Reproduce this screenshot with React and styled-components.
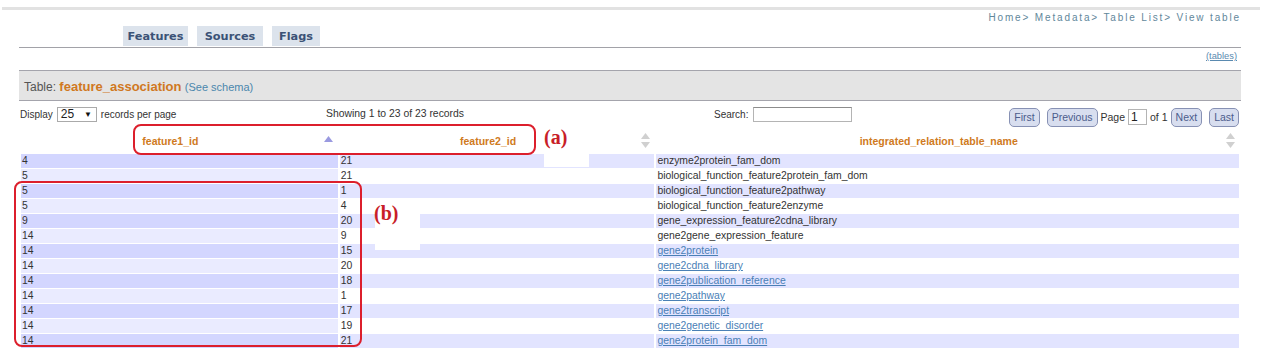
import React from 'react';
import styled, {createGlobalStyle} from 'styled-components';

//rows shown on the first page
const rows = [
    {a: 4, b: 21, name: 'enzyme2protein_fam_dom'},
    {a: 5, b: 21, name: 'biological_function_feature2protein_fam_dom'},
    {a: 5, b: 1, name: 'biological_function_feature2pathway'},
    {a: 5, b: 4, name: 'biological_function_feature2enzyme'},
    {a: 9, b: 20, name: 'gene_expression_feature2cdna_library'},
    {a: 14, b: 9, name: 'gene2gene_expression_feature'},
    {a: 14, b: 15, name: 'gene2protein', link: true},
    {a: 14, b: 20, name: 'gene2cdna_library', link: true},
    {a: 14, b: 18, name: 'gene2publication_reference', link: true},
    {a: 14, b: 1, name: 'gene2pathway', link: true},
    {a: 14, b: 17, name: 'gene2transcript', link: true},
    {a: 14, b: 19, name: 'gene2genetic_disorder', link: true},
    {a: 14, b: 21, name: 'gene2protein_fam_dom', link: true},
];

const SortAsc = () => (
    <svg width="9" height="6" viewBox="0 0 9 6">
        <path d="M4.5 0 L9 6 L0 6 Z" fill="#9a9ae0"/>
    </svg>
);

const SortBoth = () => (
    <svg width="9" height="16" viewBox="0 0 9 16">
        <path d="M4.5 0 L9 6 L0 6 Z" fill="#d0d0d0"/>
        <path d="M0 9 L9 9 L4.5 15 Z" fill="#d0d0d0"/>
    </svg>
);

const App = () => {
    return (
        <Page>
            <GlobalStyle/>
            <TopRule/>
            <Content>
                <Breadcrumb>Home&gt; Metadata&gt; Table List&gt; View table</Breadcrumb>
                <TabBar>
                    <Tab $w={65}>Features</Tab>
                    <Tab $w={66}>Sources</Tab>
                    <Tab $w={48}>Flags</Tab>
                </TabBar>
                <TablesLink>(tables)</TablesLink>
                <TitleBar>
                    Table: <strong>feature_association</strong> <small>(See schema)</small>
                </TitleBar>
                <Controls>
                    <Length>
                        Display
                        <FakeSelect>25<span>&#9660;</span></FakeSelect>
                        records per page
                    </Length>
                    <Info>Showing 1 to 23 of 23 records</Info>
                    <Search>Search: <SearchBox/></Search>
                    <Paging>
                        <PageButton>First</PageButton>
                        <PageButton $gap>Previous</PageButton>
                        <span>Page</span>
                        <PageBox>1</PageBox>
                        <span>of 1</span>
                        <PageButton>Next</PageButton>
                        <PageButton $gap>Last</PageButton>
                    </Paging>
                </Controls>
                <DataTable>
                    <colgroup>
                        <col style={{width: 317}}/>
                        <col style={{width: 315}}/>
                        <col style={{width: 583}}/>
                    </colgroup>
                    <thead>
                    <tr>
                        <Th>feature1_id<Icon><SortAsc/></Icon></Th>
                        <Th>feature2_id<Icon $both><SortBoth/></Icon></Th>
                        <Th>integrated_relation_table_name<Icon $both><SortBoth/></Icon></Th>
                    </tr>
                    </thead>
                    <tbody>
                    {rows.map((row, index) => {
                        const odd = index % 2 === 0;
                        return <tr key={index}>
                            <Td $odd={odd} $sorted>{row.a}</Td>
                            <Td $odd={odd}>{row.b}</Td>
                            <Td $odd={odd}>{row.link ? <a>{row.name}</a> : row.name}</Td>
                        </tr>
                    })}
                    </tbody>
                </DataTable>
            </Content>

            {/* annotations drawn over the screenshot */}
            <Patch style={{left: 544, top: 153, width: 45, height: 14}}/>
            <Patch style={{left: 375, top: 200, width: 45, height: 50}}/>
            <Marker style={{left: 133, top: 124, width: 403, height: 31}}/>
            <Marker style={{left: 14, top: 181, width: 348, height: 166}}/>
            <Label style={{left: 544, top: 126}}>(a)</Label>
            <Label style={{left: 374, top: 202}}>(b)</Label>
        </Page>
    );
};

const GlobalStyle = createGlobalStyle`
    body {
        margin: 0;
        background: #fff;
        font-family: "Liberation Sans", Arial, sans-serif;
    }
`;

const Page = styled.div`
    position: relative;
    width: 1279px;
    height: 351px;
    overflow: hidden;
    color: #333;
`;

const TopRule = styled.div`
    margin: 7px 19px 0 2px;
    border-top: 3px solid #e2e2e2;
`;

const Content = styled.div`
    margin-left: 19px;
    width: 1222px;
`;

const Breadcrumb = styled.div`
    margin-top: 2px;
    height: 12px;
    line-height: 12px;
    text-align: right;
    font-size: 10px;
    letter-spacing: 1.85px;
    color: #62879b;
`;

const TabBar = styled.div`
    display: flex;
    align-items: flex-end;
    gap: 9px;
    margin-top: 2px;
    height: 21px;
    padding-left: 104px;
    border-bottom: 1px solid #a2a2a8;
`;

const Tab = styled.div`
    width: ${p => p.$w}px;
    height: 20px;
    margin-bottom: 1px;
    background: #dce3ec;
    color: #3b5276;
    font-family: "DejaVu Sans", Verdana, sans-serif;
    font-weight: bold;
    font-size: 11.3px;
    line-height: 22px;
    text-align: center;
`;

const TablesLink = styled.div`
    height: 14px;
    line-height: 14px;
    margin-top: 1px;
    padding-right: 4px;
    text-align: right;
    font-size: 9.3px;
    color: #5a8ab0;
    text-decoration: underline;
`;

const TitleBar = styled.div`
    margin-top: 7px;
    height: 29px;
    line-height: 31px;
    padding-left: 5px;
    background: #e4e4e4;
    border-top: 1px solid #a4a4ac;
    border-bottom: 1px solid #a4a4ac;
    font-size: 12px;
    color: #555;

    strong {
        font-size: 13px;
        color: #d0781f;
    }

    small {
        font-size: 11px;
        color: #4b87ad;
    }
`;

const Controls = styled.div`
    display: flex;
    align-items: center;
    height: 26px;
    font-size: 10px;
    color: #333;
`;

const Length = styled.div`
    display: flex;
    align-items: center;
    gap: 4px;
    width: 306px;
    padding-left: 1px;
`;

const FakeSelect = styled.div`
    display: flex;
    justify-content: space-between;
    align-items: center;
    width: 40px;
    height: 15px;
    padding: 0 4px 0 3px;
    box-sizing: border-box;
    border: 1px solid #aaa;
    font-size: 12px;
    color: #222;

    span {
        font-size: 8px;
        color: #111;
    }
`;

const Info = styled.div`
    width: 388px;
    margin-top: -2px;
    font-size: 10.4px;
`;

const Search = styled.div`
    display: flex;
    align-items: center;
    gap: 5px;
    margin-top: 1px;
`;

const SearchBox = styled.div`
    width: 97px;
    height: 13px;
    border: 1px solid #b4b4b4;
    border-top-color: #8c8c8c;
`;

const Paging = styled.div`
    display: flex;
    align-items: center;
    gap: 3px;
    margin-left: auto;
    margin-right: 2px;
    margin-top: 6px;
    font-size: 10.5px;
    color: #333;
`;

const PageButton = styled.div`
    height: 17px;
    line-height: 17px;
    padding: 0 4px;
    margin-left: ${p => p.$gap ? 4 : 0}px;
    border: 1px solid #8791b4;
    border-radius: 5px;
    background: #d8deef;
    color: #4c5c8c;
    font-size: 10.5px;
`;

const PageBox = styled.div`
    width: 15px;
    height: 14px;
    line-height: 14px;
    padding-left: 2px;
    border: 1px solid #b4b4b4;
    font-size: 12px;
    color: #222;
`;

const DataTable = styled.table`
    border-collapse: separate;
    border-spacing: 2px 1px;
    table-layout: fixed;
    font-size: 10.4px;
`;

const Th = styled.th`
    position: relative;
    height: 25px;
    padding: 1px 18px 0 0;
    box-sizing: border-box;
    text-align: center;
    font-size: 10.5px;
    font-weight: bold;
    color: #cf7a21;
`;

const Icon = styled.span`
    position: absolute;
    right: ${p => p.$both ? 4 : 5}px;
    top: ${p => p.$both ? 5 : 8}px;
    line-height: 0;
`;

const Td = styled.td`
    height: 14px;
    line-height: 14px;
    padding: 0 1px;
    white-space: nowrap;
    color: #333;
    background: ${p => p.$odd
            ? (p.$sorted ? '#d3d6ff' : '#e2e4ff')
            : (p.$sorted ? '#eaebff' : '#fff')};

    a {
        color: #4a80b6;
        text-decoration: underline;
    }
`;

const Patch = styled.div`
    position: absolute;
    background: #fff;
`;

const Marker = styled.div`
    position: absolute;
    box-sizing: border-box;
    border: 2px solid #dc1f2c;
    border-radius: 8px;
`;

const Label = styled.div`
    position: absolute;
    font-family: "Liberation Serif", "Times New Roman", serif;
    font-weight: bold;
    font-size: 20px;
    line-height: 22px;
    color: #c81e28;
`;

export default App;
